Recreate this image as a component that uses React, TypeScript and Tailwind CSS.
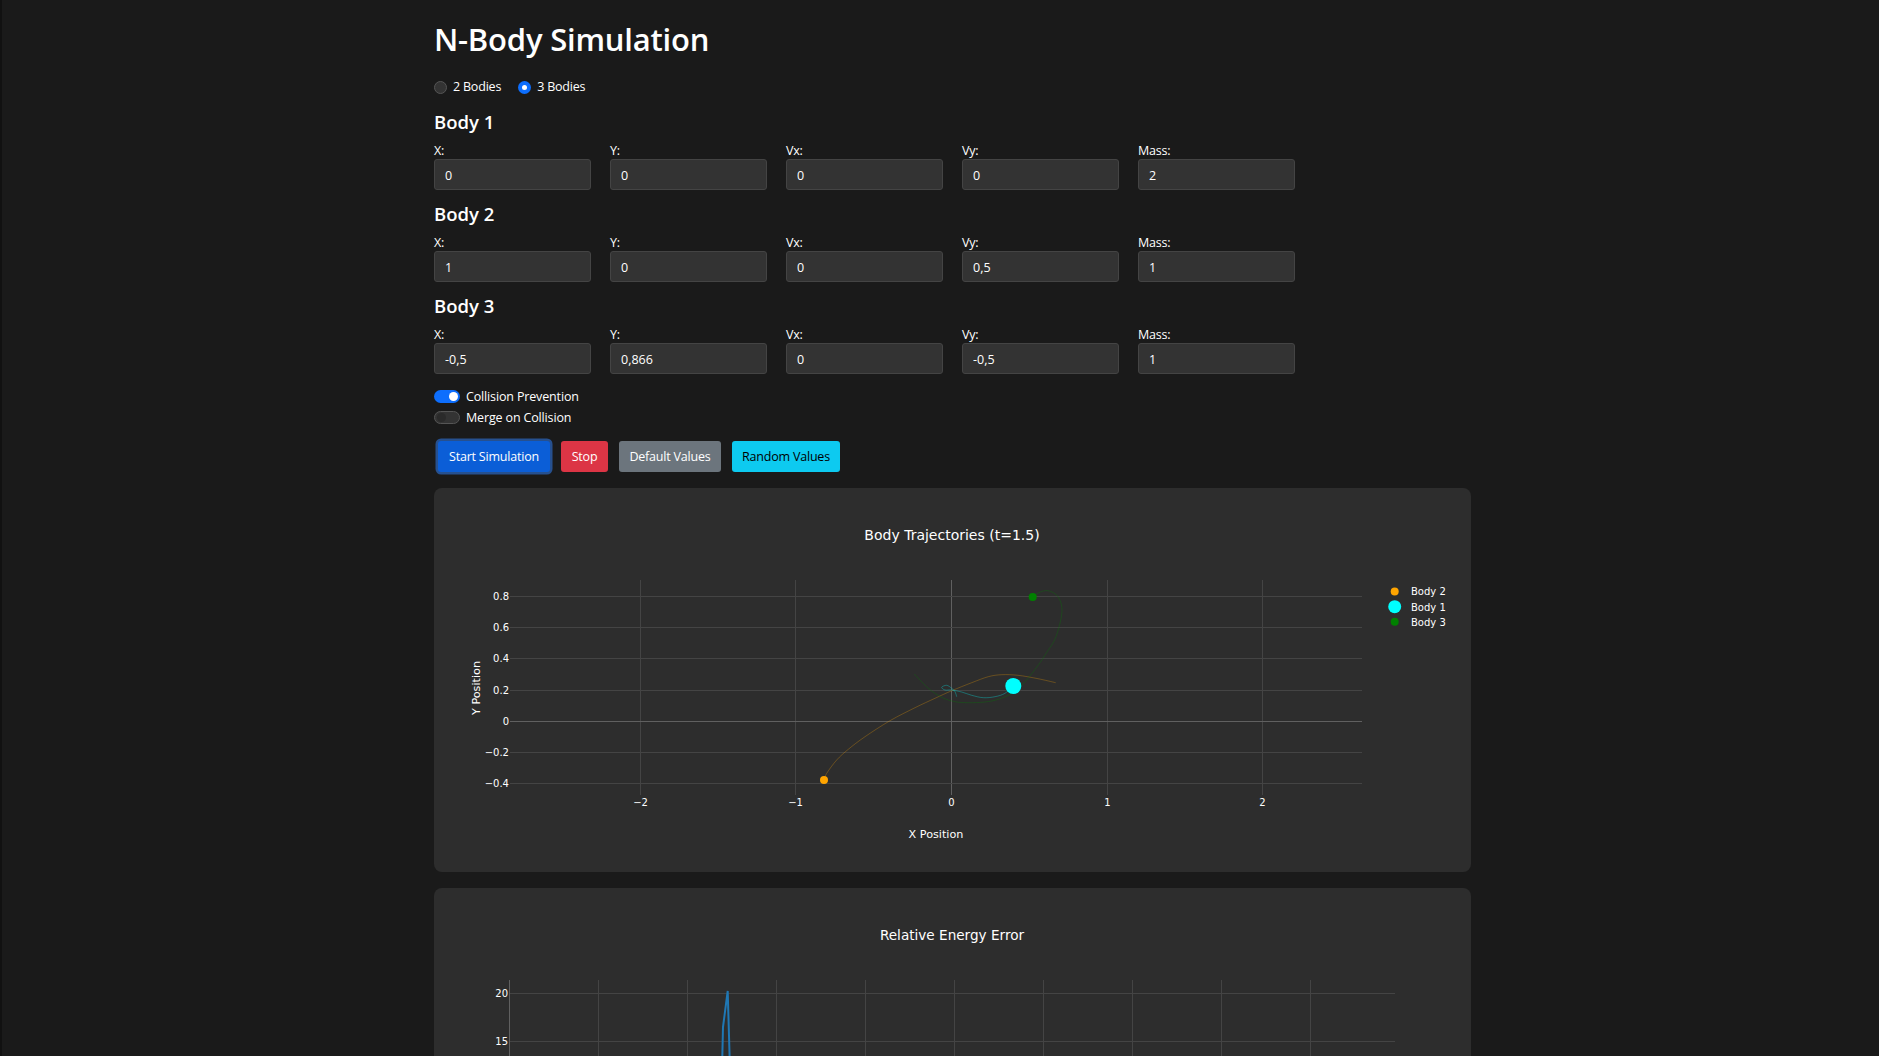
// N-Body Simulation page with two plot cards
import { useState } from "react";

const sans = "font-['Open_Sans',sans-serif]";
const gridColor = "#444444";
const zeroColor = "#606060";
const plotFont = "'DejaVu Sans', Verdana, sans-serif";

type Point = [number, number];

interface BodyValues {
  name: string;
  x: string;
  y: string;
  vx: string;
  vy: string;
  mass: string;
}

const bodies: BodyValues[] = [
  { name: "Body 1", x: "0", y: "0", vx: "0", vy: "0", mass: "2" },
  { name: "Body 2", x: "1", y: "0", vx: "0", vy: "0,5", mass: "1" },
  { name: "Body 3", x: "-0,5", y: "0,866", vx: "0", vy: "-0,5", mass: "1" },
];

const orangeTrail: Point[] = [
  [824, 780], [826.7, 773.3], [836.7, 760], [848.3, 749.3], [865, 736.7], [890, 720.7],
  [915, 707.7], [935, 698.3], [951.5, 690.8], [971.7, 682.7], [988.3, 676.7], [1001.7, 674.7],
  [1018, 675.3], [1038, 678.7], [1055.7, 682.7],
];
const greenTrail: Point[] = [
  [1032.7, 597], [1038.8, 592.7], [1048, 590.7], [1058, 596.7], [1062, 611.7], [1056, 636.7],
  [1047, 652], [1038.3, 665], [1025, 681.7], [1011.7, 693.3], [998.3, 699.3], [985, 702],
  [968.3, 702.7], [955, 701.7], [941.7, 697.3], [928.3, 688.3], [914.3, 674],
];
const cyanTrail: Point[] = [
  [1013, 686], [1005, 693.3], [995, 696.7], [983.3, 697.7], [971.7, 695.3], [961.7, 692],
  [951.7, 690], [945, 690], [941.7, 687.3], [946.7, 685.3], [951.7, 688.3], [955, 691.7],
  [956.7, 696.7],
];

// smooth line through the sampled points
function smooth(points: Point[]) {
  let d = `M${points[0][0]} ${points[0][1]}`;
  for (let i = 0; i < points.length - 1; i++) {
    const p0 = points[Math.max(i - 1, 0)];
    const p1 = points[i];
    const p2 = points[i + 1];
    const p3 = points[Math.min(i + 2, points.length - 1)];
    const c1x = p1[0] + (p2[0] - p0[0]) / 6;
    const c1y = p1[1] + (p2[1] - p0[1]) / 6;
    const c2x = p2[0] - (p3[0] - p1[0]) / 6;
    const c2y = p2[1] - (p3[1] - p1[1]) / 6;
    d += ` C${c1x} ${c1y} ${c2x} ${c2y} ${p2[0]} ${p2[1]}`;
  }
  return d;
}

function Field({ label, value }: { label: string; value: string }) {
  return (
    <label className="flex w-[157px] flex-col">
      <span className="h-[18px] pt-[1px] text-[12.5px] leading-[18px] tracking-[-0.2px] text-white">{label}</span>
      <input
        defaultValue={value}
        className={`${sans} h-[31px] w-full rounded-[3px] border border-[#444444] bg-[#333333] px-[10px] pt-[1px] text-[12.5px] text-white outline-none`}
      />
    </label>
  );
}

function BodyRow({ body }: { body: BodyValues }) {
  return (
    <div className="h-[92px] pt-[8px]">
      <h3 className="mb-[7px] h-[25px] text-[18.5px] leading-[25px] font-semibold text-white">{body.name}</h3>
      <div className="flex gap-[19px]">
        <Field label="X:" value={body.x} />
        <Field label="Y:" value={body.y} />
        <Field label="Vx:" value={body.vx} />
        <Field label="Vy:" value={body.vy} />
        <Field label="Mass:" value={body.mass} />
      </div>
    </div>
  );
}

function Radio({ label, checked }: { label: string; checked?: boolean }) {
  return (
    <div className="flex items-center gap-[6px]">
      {checked ? (
        <span className="flex h-[13px] w-[13px] items-center justify-center rounded-full bg-[#0d6efd]">
          <span className="h-[5px] w-[5px] rounded-full bg-white" />
        </span>
      ) : (
        <span className="h-[13px] w-[13px] rounded-full border border-[#555555] bg-[#333333]" />
      )}
      <span className="pt-[1px] text-[12.5px] tracking-[-0.2px] text-white">{label}</span>
    </div>
  );
}

function Toggle({ label, on }: { label: string; on?: boolean }) {
  return (
    <div className="flex h-[19px] items-center gap-[6px]">
      {on ? (
        <span className="flex h-[13px] w-[26px] items-center justify-end rounded-full bg-[#0d6efd] px-[2px]">
          <span className="h-[9px] w-[9px] rounded-full bg-white" />
        </span>
      ) : (
        <span className="flex h-[13px] w-[26px] items-center rounded-full border border-[#555555] bg-[#333333] px-[2px]">
          <span className="h-[9px] w-[9px] rounded-full bg-[#2a2a2a]" />
        </span>
      )}
      <span className="pt-[2px] text-[12.5px] tracking-[-0.15px] text-white">{label}</span>
    </div>
  );
}

function TrajectoryPlot() {
  const xs = [640.5, 795.5, 951.5, 1107.5, 1262.5];
  const ys = [596.5, 627.5, 658.5, 690.5, 752.5, 783.5];
  const yLabels: [string, number][] = [
    ["0.8", 596.5],
    ["0.6", 627.5],
    ["0.4", 658.5],
    ["0.2", 690.5],
    ["0", 721.5],
    ["−0.2", 752.5],
    ["−0.4", 783.5],
  ];
  const xLabels: [string, number][] = [
    ["−2", 640.5],
    ["−1", 795.5],
    ["0", 951.5],
    ["1", 1107.5],
    ["2", 1262.5],
  ];

  return (
    <svg width="1037" height="384" viewBox="434 488 1037 384" style={{ fontFamily: plotFont }} className="block">
      <text x="952" y="540" textAnchor="middle" fontSize="14" fill="#ffffff">
        Body Trajectories (t=1.5)
      </text>
      {xs.map((x) =>
        <line key={x} x1={x} x2={x} y1="580" y2="795" stroke={x === 951.5 ? zeroColor : gridColor} />
      )}
      {ys.map((y) => (
        <line key={y} x1="510" x2="1362" y1={y} y2={y} stroke={gridColor} />
      ))}
      <line x1="510" x2="1362" y1="721.5" y2="721.5" stroke={zeroColor} />

      <path d={smooth(orangeTrail)} fill="none" stroke="#ffa500" strokeOpacity="0.28" />
      <path d={smooth(greenTrail)} fill="none" stroke="#008000" strokeOpacity="0.3" />
      <path d={smooth(cyanTrail)} fill="none" stroke="#00ffff" strokeOpacity="0.3" />
      <circle cx="824" cy="780" r="4" fill="#ffa500" />
      <circle cx="1013.3" cy="686" r="8" fill="#00ffff" />
      <circle cx="1032.7" cy="597" r="4" fill="#008000" />

      {yLabels.map(([t, y]) => (
        <text key={t} x="509" y={y + 3.5} textAnchor="end" fontSize="10" fill="#ffffff">
          {t}
        </text>
      ))}
      {xLabels.map(([t, x]) => (
        <text key={t} x={x} y="806" textAnchor="middle" fontSize="10" fill="#ffffff">
          {t}
        </text>
      ))}
      <text x="936" y="838" textAnchor="middle" fontSize="11.2" fill="#ffffff">
        X Position
      </text>
      <text transform="translate(480 688) rotate(-90)" textAnchor="middle" fontSize="11.2" fill="#ffffff">
        Y Position
      </text>

      <circle cx="1394.7" cy="591.5" r="4" fill="#ffa500" />
      <circle cx="1394.7" cy="606.7" r="6.5" fill="#00ffff" />
      <circle cx="1394.7" cy="621.7" r="4" fill="#008000" />
      <text x="1411" y="595" fontSize="10" fill="#ffffff">Body 2</text>
      <text x="1411" y="611" fontSize="10" fill="#ffffff">Body 1</text>
      <text x="1411" y="626" fontSize="10" fill="#ffffff">Body 3</text>
    </svg>
  );
}

function EnergyPlot() {
  const xs = [598.5, 687.5, 776.5, 865.5, 954.5, 1043.5, 1132.5, 1221.5, 1310.5];

  return (
    <svg width="1037" height="384" viewBox="434 888 1037 384" style={{ fontFamily: plotFont }} className="block">
      <text x="952" y="940" textAnchor="middle" fontSize="13.6" fill="#ffffff">
        Relative Energy Error
      </text>
      {xs.map((x) => (
        <line key={x} x1={x} x2={x} y1="980" y2="1200" stroke={gridColor} />
      ))}
      <line x1="510" x2="1395" y1="993.5" y2="993.5" stroke={gridColor} />
      <line x1="510" x2="1395" y1="1041.5" y2="1041.5" stroke={gridColor} />
      <line x1="509.5" x2="509.5" y1="980" y2="1200" stroke={zeroColor} />
      <path d="M722 1070 L723 1027 L727.7 991 L730 1070" fill="none" stroke="#1f77b4" strokeWidth="2" />
      <text x="508" y="997" textAnchor="end" fontSize="10" fill="#ffffff">20</text>
      <text x="508" y="1045" textAnchor="end" fontSize="10" fill="#ffffff">15</text>
    </svg>
  );
}

export default function App() {
  const [bodyCount] = useState(3);

  return (
    <div className={`${sans} h-screen overflow-hidden border-l-2 border-[#111111] bg-[#1a1a1a]`}>
      <div className="ml-[432px] w-[1037px]">
        <h1 className="h-[73px] pt-[15px] text-[31px] leading-[48px] font-semibold tracking-[-0.2px] text-white">N-Body Simulation</h1>
        <div className="flex h-[28px] items-center gap-[16px]">
          <Radio label="2 Bodies" checked={bodyCount === 2} />
          <div className="pl-[1px]">
            <Radio label="3 Bodies" checked={bodyCount === 3} />
          </div>
        </div>
        {bodies.map((body) => (
          <BodyRow key={body.name} body={body} />
        ))}
        <div className="mt-[10px] flex flex-col gap-[2px]">
          <Toggle label="Collision Prevention" on />
          <Toggle label="Merge on Collision" />
        </div>
        <div className="mt-[9px] flex h-[41px] items-center gap-[9px] pl-[4px]">
          <button className="h-[31px] w-[112px] rounded-[3px] bg-[#0b5ed7] pt-[1px] text-[12.5px] tracking-[-0.2px] text-white shadow-[0_0_0_2.5px_#26508f]">Start Simulation</button>
          <button className="ml-[2px] h-[31px] w-[47px] rounded-[3px] bg-[#dc3545] pt-[1px] text-[12.5px] tracking-[-0.2px] text-white">Stop</button>
          <button className="ml-[2px] h-[31px] w-[102px] rounded-[3px] bg-[#6c757d] pt-[1px] text-[12.5px] tracking-[-0.2px] text-white">Default Values</button>
          <button className="ml-[2px] h-[31px] w-[108px] rounded-[3px] bg-[#0dcaf0] pt-[1px] text-[12.5px] tracking-[-0.2px] text-black">Random Values</button>
        </div>
        <div className="mt-[11px] h-[384px] rounded-lg bg-[#2d2d2d]">
          <TrajectoryPlot />
        </div>
        <div className="mt-4 h-[384px] rounded-lg bg-[#2d2d2d]">
          <EnergyPlot />
        </div>
      </div>
    </div>
  );
}
